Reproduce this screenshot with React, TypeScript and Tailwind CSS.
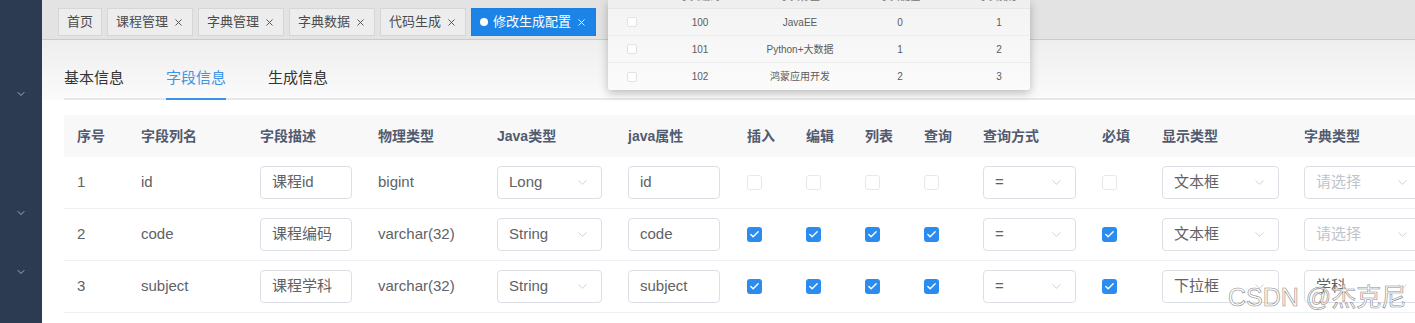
import { ChevronDown, Check, X } from 'lucide-react';

const font = 'font-["Liberation_Sans","Noto_Sans_CJK_SC",sans-serif]';

const tags = ['课程管理', '字典管理', '字典数据', '代码生成'];

const cols = 'grid grid-cols-[64px_119px_118px_119px_131px_119px_59px_59px_59px_59px_119px_60px_142px_140px]';

const headers = ['序号', '字段列名', '字段描述', '物理类型', 'Java类型', 'java属性', '插入', '编辑', '列表', '查询', '查询方式', '必填', '显示类型', '字典类型'];

type Row = {
  no: string;
  name: string;
  desc: string;
  type: string;
  javaType: string;
  prop: string;
  flags: boolean[];
  query: string;
  required: boolean;
  show: string;
  dict: string;
};

const rows: Row[] = [
  { no: '1', name: 'id', desc: '课程id', type: 'bigint', javaType: 'Long', prop: 'id', flags: [false, false, false, false], query: '=', required: false, show: '文本框', dict: '' },
  { no: '2', name: 'code', desc: '课程编码', type: 'varchar(32)', javaType: 'String', prop: 'code', flags: [true, true, true, true], query: '=', required: true, show: '文本框', dict: '' },
  { no: '3', name: 'subject', desc: '课程学科', type: 'varchar(32)', javaType: 'String', prop: 'subject', flags: [true, true, true, true], query: '=', required: true, show: '下拉框', dict: '学科' },
];

// rows of the dictionary dropdown that hangs over the tags bar
const popupRows = [
  ['100', 'JavaEE', '0', '1'],
  ['101', 'Python+大数据', '1', '2'],
  ['102', '鸿蒙应用开发', '2', '3'],
];

const popupCols = 'grid grid-cols-[48px_88px_112px_88px_86px]';

const Box = ({ checked }: { checked: boolean }) =>
  checked ? (
    <span className="flex h-[15px] w-[15px] items-center justify-center rounded-[3px] bg-[#2b8cf0]">
      <Check className="h-[11px] w-[11px] text-white" strokeWidth={3} />
    </span>
  ) : (
    <span className="h-[15px] w-[15px] rounded-[3px] border border-[#e6e8ec] bg-white" />
  );

const Input = ({ value, w }: { value: string; w: string }) => (
  <div className={`flex h-[33px] items-center rounded-[4px] border border-[#dcdfe6] bg-white px-[11px] text-[15px] text-[#606266] ${w}`}>
    {value}
  </div>
);

const Select = ({ value, w, placeholder }: { value: string; w: string; placeholder?: string }) => (
  <div className={`flex h-[33px] items-center justify-between rounded-[4px] border border-[#dcdfe6] bg-white pl-[11px] pr-[11px] text-[15px] ${w}`}>
    <span className={value ? 'text-[#606266]' : 'text-[#c0c4cc]'}>{value || placeholder}</span>
    <ChevronDown className="h-[15px] w-[15px] text-[#c0c4cc]" strokeWidth={1.25} />
  </div>
);

export default function App() {
  return (
    <div className={`flex h-[323px] w-[1415px] overflow-hidden bg-white ${font}`}>
      {/* Sidebar */}
      <aside className="flex w-[42px] shrink-0 flex-col items-center bg-[#2c3b51] pt-[88px]">
        <ChevronDown className="h-[12px] w-[12px] text-[#a3adbb]" />
        <ChevronDown className="mt-[107px] h-[12px] w-[12px] text-[#a3adbb]" />
        <ChevronDown className="mt-[47px] h-[12px] w-[12px] text-[#a3adbb]" />
      </aside>

      <main className="relative min-w-0 flex-1 overflow-hidden">
        {/* Tags view */}
        <div className="flex h-[40px] items-start gap-[5px] border-b border-[#cbcbcb] bg-[#e3e3e3] pl-[16px] pt-[8px]">
          <div className="flex h-[28px] items-center border border-[#d6d6d6] bg-[#ededed] px-[8px] text-[13px] text-[#4b4b4b]">首页</div>
          {tags.map((t) => (
            <div key={t} className="flex h-[28px] items-center gap-[5px] border border-[#d6d6d6] bg-[#ededed] px-[8px] text-[13px] text-[#4b4b4b]">
              {t}
              <X className="h-[11px] w-[11px]" strokeWidth={2} />
            </div>
          ))}
          <div className="flex h-[28px] items-center gap-[5px] border border-[#1a7fe0] bg-[#1b84e6] px-[8px] text-[13px] text-white">
            <span className="h-[8px] w-[8px] rounded-full bg-white" />
            修改生成配置
            <X className="h-[11px] w-[11px]" strokeWidth={2} />
          </div>
        </div>

        {/* Tabs */}
        <div className="bg-gradient-to-b from-[#eeeeee] to-[#fbfbfb] pl-[22px] pt-[18px]">
          <div className="flex gap-[42px] border-b-2 border-[#e6e8ee]">
            <div className="flex h-[40px] items-center text-[15px] text-[#333]">基本信息</div>
            <div className="-mb-[2px] flex h-[42px] items-center border-b-2 border-[#3d94e6] text-[15px] text-[#3d94e6]">字段信息</div>
            <div className="flex h-[40px] items-center text-[15px] text-[#333]">生成信息</div>
          </div>
        </div>

        {/* Columns table */}
        <div className="pl-[22px] pt-[15px]">
          <div className={`${cols} h-[42px] items-center bg-[#f8f8f9] text-[14px] font-bold text-[#515a6e]`}>
            {headers.map((h) => (
              <div key={h} className="px-[13px] whitespace-nowrap">{h}</div>
            ))}
          </div>
          {rows.map((r) => (
            <div key={r.no} className={`${cols} h-[52px] items-center border-b border-[#eef0f4] text-[15px] text-[#606266]`}>
              <div className="px-[13px]">{r.no}</div>
              <div className="px-[13px]">{r.name}</div>
              <div className="px-[13px]"><Input value={r.desc} w="w-[92px]" /></div>
              <div className="px-[13px]">{r.type}</div>
              <div className="px-[13px]"><Select value={r.javaType} w="w-[105px]" /></div>
              <div className="px-[13px]"><Input value={r.prop} w="w-[92px]" /></div>
              {r.flags.map((f, i) => (
                <div key={i} className="flex px-[13px]"><Box checked={f} /></div>
              ))}
              <div className="px-[13px]"><Select value={r.query} w="w-[93px]" /></div>
              <div className="flex px-[13px]"><Box checked={r.required} /></div>
              <div className="px-[13px]"><Select value={r.show} w="w-[117px]" /></div>
              <div className="pl-[13px]"><Select value={r.dict} placeholder="请选择" w="w-[118px]" /></div>
            </div>
          ))}
          {/* next row, only the top edge of its fields is in view */}
          <div className={`${cols} h-[52px] items-center`}>
            <div />
            <div />
            <div className="px-[13px]"><div className="h-[33px] w-[92px] rounded-[4px] border border-[#dcdfe6]" /></div>
            <div />
            <div className="px-[13px]"><div className="h-[33px] w-[105px] rounded-[4px] border border-[#dcdfe6]" /></div>
            <div className="px-[13px]"><div className="h-[33px] w-[92px] rounded-[4px] border border-[#dcdfe6]" /></div>
            <div />
            <div />
            <div />
            <div />
            <div className="px-[13px]"><div className="h-[33px] w-[93px] rounded-[4px] border border-[#dcdfe6]" /></div>
            <div />
            <div className="px-[13px]"><div className="h-[33px] w-[117px] rounded-[4px] border border-[#dcdfe6]" /></div>
            <div className="pl-[13px]"><div className="h-[33px] w-[118px] rounded-[4px] border border-[#dcdfe6]" /></div>
          </div>
        </div>

        {/* Dictionary dropdown popup, its header scrolled mostly out of view */}
        <div className="absolute left-[566px] top-0 w-[422px] overflow-hidden rounded-b-[3px] bg-gradient-to-b from-[#f3f3f3] to-[#fbfbfb] text-[10px] text-[#5c5c5c] shadow-[0_3px_10px_rgba(0,0,0,0.25)]">
          <div className={`${popupCols} h-[9px] overflow-hidden border-b border-[#e6e6e6] bg-[#efefef] font-bold leading-[12px] text-[#888]`}>
            <span />
            <span className="-mt-[9px] text-center">字典编码</span>
            <span className="-mt-[9px] text-center">字典标签</span>
            <span className="-mt-[9px] text-center">字典键值</span>
            <span className="-mt-[9px] pl-[24px] text-center">字典排序</span>
          </div>
          {popupRows.map((p, i) => (
            <div key={p[0]} className={`${popupCols} h-[27px] items-center ${i < 2 ? 'border-b border-[#ececec]' : ''}`}>
              <span className="ml-[19px] h-[10px] w-[10px] rounded-[2px] border border-[#e2e2e2] bg-white" />
              <span className="text-center">{p[0]}</span>
              <span className="text-center">{p[1]}</span>
              <span className="text-center">{p[2]}</span>
              <span className="pl-[24px] text-center">{p[3]}</span>
            </div>
          ))}
        </div>

        {/* Watermark */}
        <div className="absolute left-[1186px] top-[279px] text-[25px] text-white/85 [-webkit-text-stroke:0.6px_#8a8a8a]">
          CSDN @杰克尼
        </div>
      </main>
    </div>
  );
}
